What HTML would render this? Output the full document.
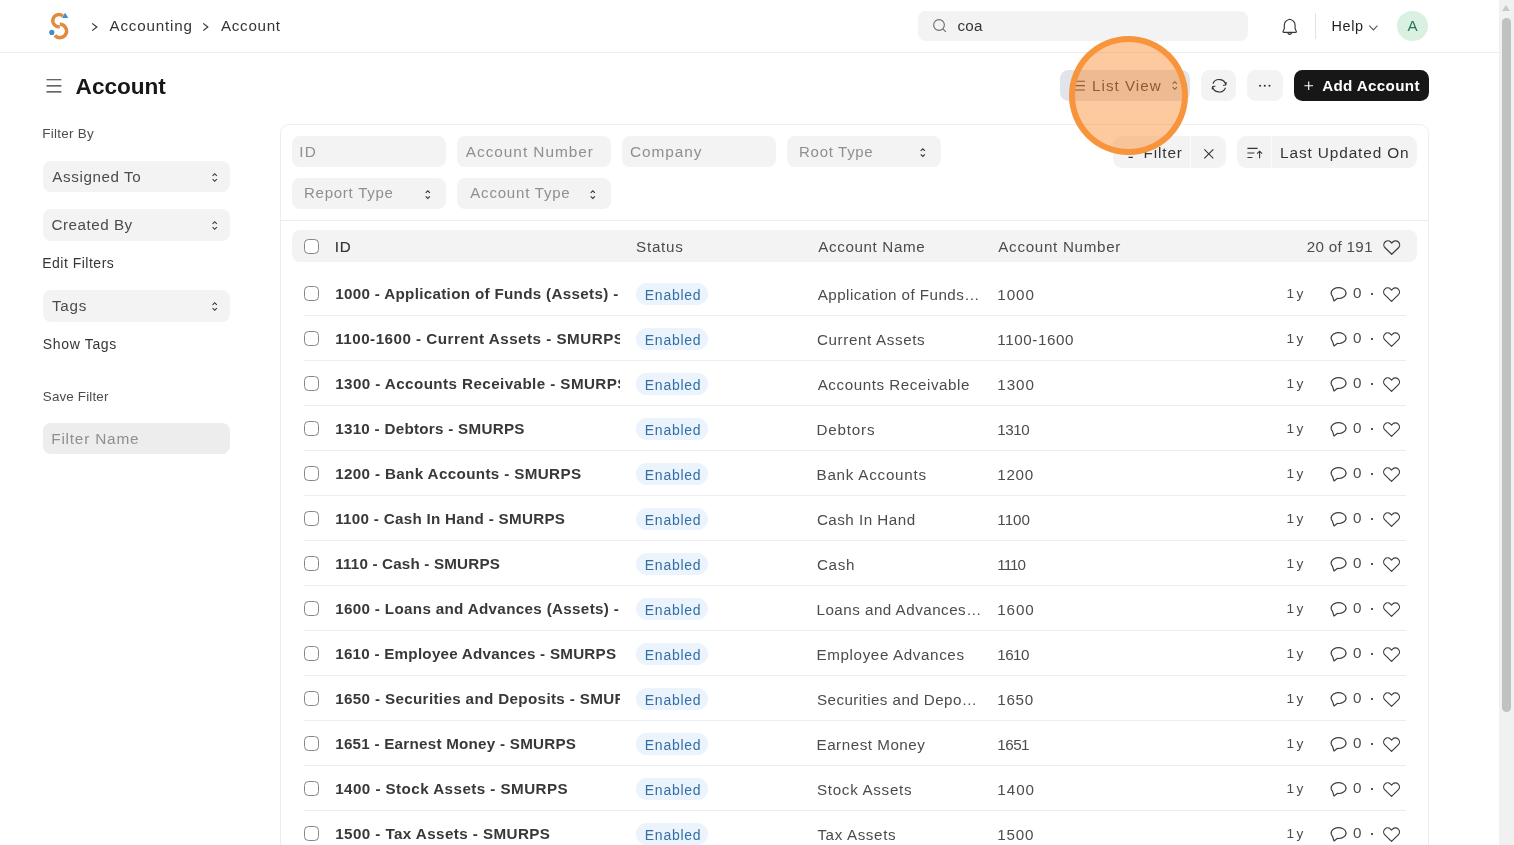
<!DOCTYPE html>
<html lang="en">
<head>
<meta charset="utf-8">
<title>Account</title>
<style>
*{box-sizing:border-box}
html,body{margin:0;padding:0}
body{width:1514px;height:845px;overflow:hidden;position:relative;background:#fff;color:#383838;font-family:"Liberation Sans",sans-serif;font-size:16px;opacity:.999;will-change:transform}
h1{margin:0}
svg{display:block;position:absolute;overflow:visible}
.t{position:absolute;white-space:nowrap;line-height:20px;font-weight:400;text-decoration:none}
.sb{position:absolute;left:1499px;top:0;width:15px;height:845px;background:#f1f1f1}
.sb i{position:absolute;left:3px;top:18px;width:9px;height:694px;border-radius:5px;background:#c1c1c1}
.sb b{position:absolute;left:3px;top:5px;width:0;height:0;border-left:4.5px solid transparent;border-right:4.5px solid transparent;border-bottom:6px solid #c9c9c9}
.nav{position:absolute;left:0;top:0;width:1499px;height:53px;border-bottom:1px solid #ededed}
.avatar{position:absolute;left:1396.800px;top:10.800px;width:31.200px;height:30px;border-radius:50%;background:#daf0e1}
.frame{position:absolute;left:280px;top:124px;width:1149px;height:760px;border:1px solid #ededed;border-radius:9px 9px 0 0}
.cb{position:absolute;width:15px;height:15px;border:1px solid #858585;border-radius:4.500px;background:#fff}
.rowline{position:absolute;left:303.600px;width:1102.800px;height:1px;background:#ededed}
.pill{position:absolute;left:636px;width:72px;height:22.200px;border-radius:12px;background:#ebf3fc}
.hl{position:absolute;left:1069.100px;top:36.200px;width:119px;height:118.600px;border-radius:50%;background:rgba(251,138,44,.46);border:6px solid #f7943c}
</style>
</head>
<body>
<div class="sb"><b></b><i></i></div>
<header>
<div class="nav"></div>
<svg class="ic" style="left:48px;top:11px" width="22" height="30" viewBox="48 11 22 30"><path d="M62.82 15.93A6.1 6.1 0 1 0 59.75 26.64" fill="none" stroke="#e08a3c" stroke-width="3.400"/><path d="M59.78 24.35A6.65 6.65 0 1 1 54.81 35.27" fill="none" stroke="#e08a3c" stroke-width="3.500"/><path d="M65.100 12.700 68.300 17.900H62z" fill="#3f8fc4"/><circle cx="51.800" cy="32.400" r="2.600" fill="#3f8fc4"/></svg>
<svg class="ic" style="left:91px;top:22px" width="8" height="10" viewBox="91 22 8 10"><path d="M92.2 23.400 96.8 27 92.2 30.600" fill="none" stroke="#353535" stroke-width="1.200"/></svg>
<span class="t" style="left:109.5px;top:16px;font-size:15.2px;color:#353535;letter-spacing:0.81px;">Accounting</span>
<svg class="ic" style="left:202px;top:22px" width="8" height="10" viewBox="202 22 8 10"><path d="M203.2 23.400 207.8 27 203.2 30.600" fill="none" stroke="#353535" stroke-width="1.200"/></svg>
<span class="t" style="left:221.0px;top:16px;font-size:15.2px;color:#353535;letter-spacing:0.69px;">Account</span>
<div class="search" style="position:absolute;left:918px;top:11px;width:330px;height:30px;background:rgba(243,243,243,.998);border-radius:8px;"></div>
<svg class="ic" style="left:931px;top:18px" width="17" height="17" viewBox="931 18 17 17"><circle cx="939" cy="25" r="5.350" fill="none" stroke="#6b6b6b" stroke-width="1.100"/><path d="M942.800 28.800 945.900 31.900" stroke="#6b6b6b" stroke-width="1.100" fill="none"/></svg>
<span class="t" style="left:957.4px;top:16px;font-size:15.2px;color:#353535;letter-spacing:0.27px;">coa</span>
<svg class="ic" style="left:1281px;top:17px" width="17" height="19" viewBox="1281 17 17 19"><path transform="translate(0 .450)" d="M1289.700 18.800C1286.600 19.500 1284.400 21.600 1284.300 24.700L1284.300 28.300L1283.100 30.900Q1282.800 31.900 1283.800 31.900L1295.600 31.900Q1296.600 31.900 1296.300 30.900L1295.100 28.300L1295.100 24.700C1295 21.600 1292.800 19.500 1289.700 18.800ZM1287.800 32.300a1.950 2 0 0 0 3.800 0" fill="none" stroke="#383838" stroke-width="1.150" stroke-linejoin="round"/></svg>
<div style="position:absolute;left:1315px;top:13px;width:1px;height:26px;background:#e2e2e2;border-radius:0;"></div>
<span class="t" style="left:1331.6px;top:16px;font-size:14.4px;color:#1f1f1f;letter-spacing:0.61px;">Help</span>
<svg class="ic" style="left:1368px;top:24px" width="12" height="8" viewBox="1368 24 12 8"><path d="M1369.300 25.600 1373.400 29.900l4.100-4.300" fill="none" stroke="#555" stroke-width="1.050"/></svg>
<div class="avatar"></div>
<span class="t" style="left:1407.4px;top:16px;font-size:15.2px;color:#2a7558;">A</span>
</header>
<section class="page-head">
<svg class="ic" style="left:46px;top:79px" width="16" height="14" viewBox="46 79 16 14"><path d="M46.500 79.700h14.900M46.500 85.800h14.900M46.500 91.900h14.900" stroke="#353535" stroke-width="1.150" fill="none"/></svg>
<h1 class="t" style="left:75.6px;top:77px;font-size:22.6px;color:#171717;letter-spacing:-0.03px;font-weight:700;">Account</h1>
<div style="position:absolute;left:1059.5px;top:70px;width:130.2px;height:30.7px;background:#e1e4e9;border-radius:8.5px;"></div>
<svg class="ic" style="left:1074px;top:80px" width="12" height="11" viewBox="1074 80 12 11"><path d="M1075 81.200h10M1075 85.600h10M1075 90h10" stroke="#353535" stroke-width="1.100" fill="none"/></svg>
<span class="t" style="left:1092.1px;top:76px;font-size:15.2px;color:#353535;letter-spacing:1.01px;">List View</span>
<svg class="ic" style="left:1171px;top:80px" width="8" height="11" viewBox="1171 80 8 11"><path d="M1172.7 83.8 1174.8 81.7l2.100 2.100M1172.7 87.2 1174.8 89.3l2.100-2.100" stroke="#353535" stroke-width="1.100" fill="none"/></svg>
<div style="position:absolute;left:1201.3px;top:70px;width:34.5px;height:30.7px;background:rgba(243,243,243,.998);border-radius:8.5px;"></div>
<svg class="ic" style="left:1210px;top:78px" width="18" height="16" viewBox="1210 78 18 16"><path d="M1213.12 83.33A6.6 6.2 0 0 1 1225.74 84.89M1225.28 88.17A6.6 6.2 0 0 1 1212.66 86.61M1223.500 85.300l2.300-.300.400-2.400M1214.900 86.200l-2.300.300-.400 2.400" fill="none" stroke="#353535" stroke-width="1.150" stroke-linejoin="round" stroke-linecap="round"/></svg>
<div style="position:absolute;left:1247.3px;top:70px;width:35.3px;height:30.7px;background:rgba(243,243,243,.998);border-radius:8.5px;"></div>
<svg class="ic" style="left:1258px;top:84px" width="14" height="4" viewBox="1258 84 14 4"><circle cx="1260.1" cy="85.700" r="1.050" fill="#353535"/><circle cx="1264.8" cy="85.700" r="1.050" fill="#353535"/><circle cx="1269.5" cy="85.700" r="1.050" fill="#353535"/></svg>
<div style="position:absolute;left:1294px;top:70px;width:135px;height:30.7px;background:#171717;border-radius:8.5px;"></div>
<svg class="ic" style="left:1304px;top:81px" width="10" height="10" viewBox="1304 81 10 10"><path d="M1308.700 81.500v8.600M1304.400 85.800h8.600" stroke="#fff" stroke-width="1.100" fill="none"/></svg>
<span class="t" style="left:1322.2px;top:76px;font-size:15.2px;color:#fff;letter-spacing:0.34px;font-weight:700;">Add Account</span>
</section>
<aside>
<span class="t" style="left:42.2px;top:124px;font-size:13.4px;color:#4c4c4c;letter-spacing:0.30px;">Filter By</span>
<div style="position:absolute;left:43px;top:161px;width:187px;height:30.8px;background:rgba(243,243,243,.998);border-radius:8px;"></div>
<span class="t" style="left:52.3px;top:167px;font-size:15.2px;color:#4c4c4c;letter-spacing:0.60px;">Assigned To</span>
<svg class="ic" style="left:211px;top:172px" width="8" height="11" viewBox="211 172 8 11"><path d="M212.6 175.8 214.7 173.7l2.100 2.100M212.6 179.2 214.7 181.3l2.100-2.100" stroke="#353535" stroke-width="1.100" fill="none"/></svg>
<div style="position:absolute;left:43px;top:209px;width:187px;height:31.5px;background:rgba(243,243,243,.998);border-radius:8px;"></div>
<span class="t" style="left:51.5px;top:215px;font-size:15.2px;color:#4c4c4c;letter-spacing:0.52px;">Created By</span>
<svg class="ic" style="left:211px;top:220px" width="8" height="11" viewBox="211 220 8 11"><path d="M212.6 223.8 214.7 221.7l2.100 2.100M212.6 227.2 214.7 229.3l2.100-2.100" stroke="#353535" stroke-width="1.100" fill="none"/></svg>
<div style="position:absolute;left:43px;top:290px;width:187px;height:31.5px;background:rgba(243,243,243,.998);border-radius:8px;"></div>
<span class="t" style="left:52.0px;top:296px;font-size:15.2px;color:#4c4c4c;letter-spacing:0.74px;">Tags</span>
<svg class="ic" style="left:211px;top:301px" width="8" height="11" viewBox="211 301 8 11"><path d="M212.6 304.8 214.7 302.7l2.100 2.100M212.6 308.2 214.7 310.3l2.100-2.100" stroke="#353535" stroke-width="1.100" fill="none"/></svg>
<span class="t" style="left:42.2px;top:253px;font-size:14px;color:#353535;letter-spacing:0.50px;">Edit Filters</span>
<span class="t" style="left:42.8px;top:334px;font-size:14px;color:#353535;letter-spacing:0.66px;">Show Tags</span>
<span class="t" style="left:42.8px;top:387px;font-size:13.4px;color:#4c4c4c;letter-spacing:0.16px;">Save Filter</span>
<div style="position:absolute;left:43px;top:423px;width:187px;height:30.6px;background:#ededed;border-radius:8px;"></div>
<span class="t" style="left:51.2px;top:429px;font-size:15.4px;color:#8f8f8f;letter-spacing:0.79px;">Filter Name</span>
</aside>
<main>
<section class="filters">
<div class="frame"></div>
<div style="position:absolute;left:292px;top:136px;width:154px;height:30.5px;background:rgba(243,243,243,.998);border-radius:8px;"></div>
<span class="t" style="left:299.3px;top:142px;font-size:15.4px;color:#8f8f8f;letter-spacing:1.20px;">ID</span>
<div style="position:absolute;left:457px;top:136px;width:154px;height:30.5px;background:rgba(243,243,243,.998);border-radius:8px;"></div>
<span class="t" style="left:465.8px;top:142px;font-size:15.4px;color:#8f8f8f;letter-spacing:0.96px;">Account Number</span>
<div style="position:absolute;left:622px;top:136px;width:154px;height:30.5px;background:rgba(243,243,243,.998);border-radius:8px;"></div>
<span class="t" style="left:629.9px;top:142px;font-size:15.4px;color:#8f8f8f;letter-spacing:0.94px;">Company</span>
<div style="position:absolute;left:787px;top:136px;width:154px;height:30.5px;background:rgba(243,243,243,.998);border-radius:8px;"></div>
<span class="t" style="left:799.1px;top:142px;font-size:15.0px;color:#8f8f8f;letter-spacing:0.69px;">Root Type</span>
<svg class="ic" style="left:919px;top:147px" width="8" height="12" viewBox="919 147 8 12"><path d="M920.6999999999999 150.9 922.8 148.79999999999998l2.100 2.100M920.6999999999999 154.29999999999998 922.8 156.4l2.100-2.100" stroke="#353535" stroke-width="1.100" fill="none"/></svg>
<div style="position:absolute;left:292px;top:178px;width:154px;height:30.5px;background:rgba(243,243,243,.998);border-radius:8px;"></div>
<span class="t" style="left:304.0px;top:183px;font-size:15.0px;color:#8f8f8f;letter-spacing:0.75px;">Report Type</span>
<svg class="ic" style="left:424px;top:189px" width="8" height="12" viewBox="424 189 8 12"><path d="M425.7 192.9 427.8 190.79999999999998l2.100 2.100M425.7 196.29999999999998 427.8 198.4l2.100-2.100" stroke="#353535" stroke-width="1.100" fill="none"/></svg>
<div style="position:absolute;left:457px;top:178px;width:154px;height:30.5px;background:rgba(243,243,243,.998);border-radius:8px;"></div>
<span class="t" style="left:470.3px;top:183px;font-size:15.0px;color:#8f8f8f;letter-spacing:0.80px;">Account Type</span>
<svg class="ic" style="left:589px;top:189px" width="8" height="12" viewBox="589 189 8 12"><path d="M590.6999999999999 192.9 592.8 190.79999999999998l2.100 2.100M590.6999999999999 196.29999999999998 592.8 198.4l2.100-2.100" stroke="#353535" stroke-width="1.100" fill="none"/></svg>
<div style="position:absolute;left:1113px;top:136px;width:113px;height:31.5px;background:rgba(243,243,243,.998);border-radius:9px;"></div>
<svg class="ic" style="left:1124px;top:148px" width="13" height="11" viewBox="1124 148 13 11"><path d="M1124.700 149.800h12M1126.700 153.600h8M1128.500 157.400h4.400" stroke="#353535" stroke-width="1.100" fill="none"/></svg>
<span class="t" style="left:1143.4px;top:143px;font-size:15.4px;color:#353535;letter-spacing:0.87px;">Filter</span>
<div style="position:absolute;left:1190.2px;top:136px;width:0.9px;height:31.5px;background:rgba(255,255,255,.7);border-radius:0;"></div>
<svg class="ic" style="left:1204px;top:149px" width="10" height="10" viewBox="1204 149 10 10"><path d="M1204.300 149.400l9 9M1213.300 149.400l-9 9" stroke="#353535" stroke-width="1.100" fill="none"/></svg>
<div style="position:absolute;left:1237px;top:136px;width:180px;height:31.5px;background:rgba(243,243,243,.998);border-radius:9px;"></div>
<svg class="ic" style="left:1246px;top:147px" width="17" height="12" viewBox="1246 147 17 12"><path d="M1247.400 148.400h10.200M1247.400 153h7M1247.400 157.500h5M1259.600 158.200v-6.800M1257.100 153.700l2.500-2.500 2.500 2.500" stroke="#353535" stroke-width="1.100" fill="none"/></svg>
<div style="position:absolute;left:1271.1px;top:136px;width:0.9px;height:31.5px;background:rgba(255,255,255,.7);border-radius:0;"></div>
<span class="t" style="left:1280.1px;top:143px;font-size:15.4px;color:#353535;letter-spacing:0.87px;">Last Updated On</span>
<div style="position:absolute;left:281px;top:220px;width:1147px;height:1px;background:#ededed;border-radius:0;"></div>
</section>
<section class="list">
<div class="list-head">
<div style="position:absolute;left:292px;top:230.2px;width:1125px;height:32.1px;background:rgba(243,243,243,.998);border-radius:8px;"></div>
<span class="cb" style="left:304px;top:239px"></span>
<span class="t" style="left:334.8px;top:237px;font-size:15.2px;color:#353535;letter-spacing:0.79px;-webkit-text-stroke:.2px #353535;">ID</span>
<span class="t" style="left:636.1px;top:237px;font-size:15.2px;color:#4c4c4c;letter-spacing:0.74px;">Status</span>
<span class="t" style="left:818.2px;top:237px;font-size:15.2px;color:#4c4c4c;letter-spacing:0.63px;">Account Name</span>
<span class="t" style="left:998.3px;top:237px;font-size:15.2px;color:#4c4c4c;letter-spacing:0.69px;">Account Number</span>
<span class="t" style="left:1306.7px;top:237px;font-size:15.2px;color:#4c4c4c;letter-spacing:0.32px;">20 of 191</span>
<svg class="ic" style="left:1382px;top:239px" width="20" height="17" viewBox="1382 239 20 17"><path transform="translate(1383.3 240)" d="M8.450 14.250 1.750 7.750C.150 6.150.150 3.600 1.750 2C3.300.450 5.900.450 7.450 2L8.450 3l1-1C11 .450 13.600.450 15.150 2c1.600 1.600 1.600 4.150 0 5.750Z" fill="none" stroke="#3d3d3d" stroke-width="1.200" stroke-linejoin="round"/></svg>
</div>
<div class="list-row">
<div class="rowline" style="top:315px"></div>
<span class="cb" style="left:304px;top:286px"></span>
<a class="t idc" style="left:335.2px;top:284px;font-size:15.2px;color:#383838;letter-spacing:0.32px;font-weight:700;width:285.1px;overflow:hidden;">1000 - Application of Funds (Assets) - SMURPS</a>
<span class="pill" style="top:283px"></span>
<span class="t" style="left:644.8px;top:285px;font-size:14px;color:#336fa6;letter-spacing:0.74px;">Enabled</span>
<span class="t" style="left:817.7px;top:285px;font-size:15.2px;color:#4c4c4c;letter-spacing:0.45px;">Application of Funds…</span>
<span class="t" style="left:997.3px;top:285px;font-size:15.2px;color:#4c4c4c;letter-spacing:0.94px;">1000</span>
<span class="t" style="left:1286.5px;top:284px;font-size:13.6px;color:#4c4c4c;word-spacing:-1.300px;">1 y</span>
<svg class="ic" style="left:1329px;top:286px" width="20" height="18" viewBox="1329 286 20 18"><path transform="translate(1330.5 287.1)" d="M6.81 11.32A7.45 5.45 0 1 0 1.92 9.00L3.500 13.900Z" fill="none" stroke="#3d3d3d" stroke-width="1.200" stroke-linejoin="round"/></svg>
<span class="t" style="left:1352.9px;top:283px;font-size:15.2px;color:#4c4c4c;">0</span>
<span class="t" style="left:1370.2px;top:284px;font-size:13px;color:#444;font-weight:700;">·</span>
<svg class="ic" style="left:1382px;top:286px" width="20" height="18" viewBox="1382 286 20 18"><path transform="translate(1383.1 287.1)" d="M8.450 14.250 1.750 7.750C.150 6.150.150 3.600 1.750 2C3.300.450 5.900.450 7.450 2L8.450 3l1-1C11 .450 13.600.450 15.150 2c1.600 1.600 1.600 4.150 0 5.750Z" fill="none" stroke="#3d3d3d" stroke-width="1.200" stroke-linejoin="round"/></svg>
</div>
<div class="list-row">
<div class="rowline" style="top:360px"></div>
<span class="cb" style="left:304px;top:331px"></span>
<a class="t idc" style="left:335.2px;top:329px;font-size:15.2px;color:#383838;letter-spacing:0.49px;font-weight:700;width:285.1px;overflow:hidden;">1100-1600 - Current Assets - SMURPS</a>
<span class="pill" style="top:328px"></span>
<span class="t" style="left:644.8px;top:330px;font-size:14px;color:#336fa6;letter-spacing:0.74px;">Enabled</span>
<span class="t" style="left:816.9px;top:330px;font-size:15.2px;color:#4c4c4c;letter-spacing:0.63px;">Current Assets</span>
<span class="t" style="left:997.3px;top:330px;font-size:15.2px;color:#4c4c4c;letter-spacing:0.59px;">1100-1600</span>
<span class="t" style="left:1286.5px;top:329px;font-size:13.6px;color:#4c4c4c;word-spacing:-1.300px;">1 y</span>
<svg class="ic" style="left:1329px;top:331px" width="20" height="18" viewBox="1329 331 20 18"><path transform="translate(1330.5 332.1)" d="M6.81 11.32A7.45 5.45 0 1 0 1.92 9.00L3.500 13.900Z" fill="none" stroke="#3d3d3d" stroke-width="1.200" stroke-linejoin="round"/></svg>
<span class="t" style="left:1352.9px;top:328px;font-size:15.2px;color:#4c4c4c;">0</span>
<span class="t" style="left:1370.2px;top:329px;font-size:13px;color:#444;font-weight:700;">·</span>
<svg class="ic" style="left:1382px;top:331px" width="20" height="18" viewBox="1382 331 20 18"><path transform="translate(1383.1 332.1)" d="M8.450 14.250 1.750 7.750C.150 6.150.150 3.600 1.750 2C3.300.450 5.900.450 7.450 2L8.450 3l1-1C11 .450 13.600.450 15.150 2c1.600 1.600 1.600 4.150 0 5.750Z" fill="none" stroke="#3d3d3d" stroke-width="1.200" stroke-linejoin="round"/></svg>
</div>
<div class="list-row">
<div class="rowline" style="top:405px"></div>
<span class="cb" style="left:304px;top:376px"></span>
<a class="t idc" style="left:335.2px;top:374px;font-size:15.2px;color:#383838;letter-spacing:0.42px;font-weight:700;width:285.1px;overflow:hidden;">1300 - Accounts Receivable - SMURPS</a>
<span class="pill" style="top:373px"></span>
<span class="t" style="left:644.8px;top:375px;font-size:14px;color:#336fa6;letter-spacing:0.74px;">Enabled</span>
<span class="t" style="left:817.7px;top:375px;font-size:15.2px;color:#4c4c4c;letter-spacing:0.55px;">Accounts Receivable</span>
<span class="t" style="left:997.3px;top:375px;font-size:15.2px;color:#4c4c4c;letter-spacing:0.94px;">1300</span>
<span class="t" style="left:1286.5px;top:374px;font-size:13.6px;color:#4c4c4c;word-spacing:-1.300px;">1 y</span>
<svg class="ic" style="left:1329px;top:376px" width="20" height="18" viewBox="1329 376 20 18"><path transform="translate(1330.5 377.1)" d="M6.81 11.32A7.45 5.45 0 1 0 1.92 9.00L3.500 13.900Z" fill="none" stroke="#3d3d3d" stroke-width="1.200" stroke-linejoin="round"/></svg>
<span class="t" style="left:1352.9px;top:373px;font-size:15.2px;color:#4c4c4c;">0</span>
<span class="t" style="left:1370.2px;top:374px;font-size:13px;color:#444;font-weight:700;">·</span>
<svg class="ic" style="left:1382px;top:376px" width="20" height="18" viewBox="1382 376 20 18"><path transform="translate(1383.1 377.1)" d="M8.450 14.250 1.750 7.750C.150 6.150.150 3.600 1.750 2C3.300.450 5.900.450 7.450 2L8.450 3l1-1C11 .450 13.600.450 15.150 2c1.600 1.600 1.600 4.150 0 5.750Z" fill="none" stroke="#3d3d3d" stroke-width="1.200" stroke-linejoin="round"/></svg>
</div>
<div class="list-row">
<div class="rowline" style="top:450px"></div>
<span class="cb" style="left:304px;top:421px"></span>
<a class="t idc" style="left:335.2px;top:419px;font-size:15.2px;color:#383838;letter-spacing:0.28px;font-weight:700;width:285.1px;overflow:hidden;">1310 - Debtors - SMURPS</a>
<span class="pill" style="top:418px"></span>
<span class="t" style="left:644.8px;top:420px;font-size:14px;color:#336fa6;letter-spacing:0.74px;">Enabled</span>
<span class="t" style="left:816.5px;top:420px;font-size:15.2px;color:#4c4c4c;letter-spacing:0.80px;">Debtors</span>
<span class="t" style="left:997.3px;top:420px;font-size:15.2px;color:#4c4c4c;letter-spacing:-0.49px;">1310</span>
<span class="t" style="left:1286.5px;top:419px;font-size:13.6px;color:#4c4c4c;word-spacing:-1.300px;">1 y</span>
<svg class="ic" style="left:1329px;top:421px" width="20" height="18" viewBox="1329 421 20 18"><path transform="translate(1330.5 422.1)" d="M6.81 11.32A7.45 5.45 0 1 0 1.92 9.00L3.500 13.900Z" fill="none" stroke="#3d3d3d" stroke-width="1.200" stroke-linejoin="round"/></svg>
<span class="t" style="left:1352.9px;top:418px;font-size:15.2px;color:#4c4c4c;">0</span>
<span class="t" style="left:1370.2px;top:419px;font-size:13px;color:#444;font-weight:700;">·</span>
<svg class="ic" style="left:1382px;top:421px" width="20" height="18" viewBox="1382 421 20 18"><path transform="translate(1383.1 422.1)" d="M8.450 14.250 1.750 7.750C.150 6.150.150 3.600 1.750 2C3.300.450 5.900.450 7.450 2L8.450 3l1-1C11 .450 13.600.450 15.150 2c1.600 1.600 1.600 4.150 0 5.750Z" fill="none" stroke="#3d3d3d" stroke-width="1.200" stroke-linejoin="round"/></svg>
</div>
<div class="list-row">
<div class="rowline" style="top:495px"></div>
<span class="cb" style="left:304px;top:466px"></span>
<a class="t idc" style="left:335.2px;top:464px;font-size:15.2px;color:#383838;letter-spacing:0.36px;font-weight:700;width:285.1px;overflow:hidden;">1200 - Bank Accounts - SMURPS</a>
<span class="pill" style="top:463px"></span>
<span class="t" style="left:644.8px;top:465px;font-size:14px;color:#336fa6;letter-spacing:0.74px;">Enabled</span>
<span class="t" style="left:816.5px;top:465px;font-size:15.2px;color:#4c4c4c;letter-spacing:0.76px;">Bank Accounts</span>
<span class="t" style="left:997.3px;top:465px;font-size:15.2px;color:#4c4c4c;letter-spacing:0.68px;">1200</span>
<span class="t" style="left:1286.5px;top:464px;font-size:13.6px;color:#4c4c4c;word-spacing:-1.300px;">1 y</span>
<svg class="ic" style="left:1329px;top:466px" width="20" height="18" viewBox="1329 466 20 18"><path transform="translate(1330.5 467.1)" d="M6.81 11.32A7.45 5.45 0 1 0 1.92 9.00L3.500 13.900Z" fill="none" stroke="#3d3d3d" stroke-width="1.200" stroke-linejoin="round"/></svg>
<span class="t" style="left:1352.9px;top:463px;font-size:15.2px;color:#4c4c4c;">0</span>
<span class="t" style="left:1370.2px;top:464px;font-size:13px;color:#444;font-weight:700;">·</span>
<svg class="ic" style="left:1382px;top:466px" width="20" height="18" viewBox="1382 466 20 18"><path transform="translate(1383.1 467.1)" d="M8.450 14.250 1.750 7.750C.150 6.150.150 3.600 1.750 2C3.300.450 5.900.450 7.450 2L8.450 3l1-1C11 .450 13.600.450 15.150 2c1.600 1.600 1.600 4.150 0 5.750Z" fill="none" stroke="#3d3d3d" stroke-width="1.200" stroke-linejoin="round"/></svg>
</div>
<div class="list-row">
<div class="rowline" style="top:540px"></div>
<span class="cb" style="left:304px;top:511px"></span>
<a class="t idc" style="left:335.2px;top:509px;font-size:15.2px;color:#383838;letter-spacing:0.29px;font-weight:700;width:285.1px;overflow:hidden;">1100 - Cash In Hand - SMURPS</a>
<span class="pill" style="top:508px"></span>
<span class="t" style="left:644.8px;top:510px;font-size:14px;color:#336fa6;letter-spacing:0.74px;">Enabled</span>
<span class="t" style="left:816.9px;top:510px;font-size:15.2px;color:#4c4c4c;letter-spacing:0.49px;">Cash In Hand</span>
<span class="t" style="left:997.3px;top:510px;font-size:15.2px;color:#4c4c4c;letter-spacing:0.01px;">1100</span>
<span class="t" style="left:1286.5px;top:509px;font-size:13.6px;color:#4c4c4c;word-spacing:-1.300px;">1 y</span>
<svg class="ic" style="left:1329px;top:511px" width="20" height="18" viewBox="1329 511 20 18"><path transform="translate(1330.5 512.1)" d="M6.81 11.32A7.45 5.45 0 1 0 1.92 9.00L3.500 13.900Z" fill="none" stroke="#3d3d3d" stroke-width="1.200" stroke-linejoin="round"/></svg>
<span class="t" style="left:1352.9px;top:508px;font-size:15.2px;color:#4c4c4c;">0</span>
<span class="t" style="left:1370.2px;top:509px;font-size:13px;color:#444;font-weight:700;">·</span>
<svg class="ic" style="left:1382px;top:511px" width="20" height="18" viewBox="1382 511 20 18"><path transform="translate(1383.1 512.1)" d="M8.450 14.250 1.750 7.750C.150 6.150.150 3.600 1.750 2C3.300.450 5.900.450 7.450 2L8.450 3l1-1C11 .450 13.600.450 15.150 2c1.600 1.600 1.600 4.150 0 5.750Z" fill="none" stroke="#3d3d3d" stroke-width="1.200" stroke-linejoin="round"/></svg>
</div>
<div class="list-row">
<div class="rowline" style="top:585px"></div>
<span class="cb" style="left:304px;top:556px"></span>
<a class="t idc" style="left:335.2px;top:554px;font-size:15.2px;color:#383838;letter-spacing:0.18px;font-weight:700;width:285.1px;overflow:hidden;">1110 - Cash - SMURPS</a>
<span class="pill" style="top:553px"></span>
<span class="t" style="left:644.8px;top:555px;font-size:14px;color:#336fa6;letter-spacing:0.74px;">Enabled</span>
<span class="t" style="left:816.9px;top:555px;font-size:15.2px;color:#4c4c4c;letter-spacing:0.69px;">Cash</span>
<span class="t" style="left:997.3px;top:555px;font-size:15.2px;color:#4c4c4c;letter-spacing:-0.98px;">1110</span>
<span class="t" style="left:1286.5px;top:554px;font-size:13.6px;color:#4c4c4c;word-spacing:-1.300px;">1 y</span>
<svg class="ic" style="left:1329px;top:556px" width="20" height="18" viewBox="1329 556 20 18"><path transform="translate(1330.5 557.1)" d="M6.81 11.32A7.45 5.45 0 1 0 1.92 9.00L3.500 13.900Z" fill="none" stroke="#3d3d3d" stroke-width="1.200" stroke-linejoin="round"/></svg>
<span class="t" style="left:1352.9px;top:553px;font-size:15.2px;color:#4c4c4c;">0</span>
<span class="t" style="left:1370.2px;top:554px;font-size:13px;color:#444;font-weight:700;">·</span>
<svg class="ic" style="left:1382px;top:556px" width="20" height="18" viewBox="1382 556 20 18"><path transform="translate(1383.1 557.1)" d="M8.450 14.250 1.750 7.750C.150 6.150.150 3.600 1.750 2C3.300.450 5.900.450 7.450 2L8.450 3l1-1C11 .450 13.600.450 15.150 2c1.600 1.600 1.600 4.150 0 5.750Z" fill="none" stroke="#3d3d3d" stroke-width="1.200" stroke-linejoin="round"/></svg>
</div>
<div class="list-row">
<div class="rowline" style="top:630px"></div>
<span class="cb" style="left:304px;top:601px"></span>
<a class="t idc" style="left:335.2px;top:599px;font-size:15.2px;color:#383838;letter-spacing:0.33px;font-weight:700;width:285.1px;overflow:hidden;">1600 - Loans and Advances (Assets) - SMURPS</a>
<span class="pill" style="top:598px"></span>
<span class="t" style="left:644.8px;top:600px;font-size:14px;color:#336fa6;letter-spacing:0.74px;">Enabled</span>
<span class="t" style="left:816.5px;top:600px;font-size:15.2px;color:#4c4c4c;letter-spacing:0.48px;">Loans and Advances…</span>
<span class="t" style="left:997.3px;top:600px;font-size:15.2px;color:#4c4c4c;letter-spacing:0.88px;">1600</span>
<span class="t" style="left:1286.5px;top:599px;font-size:13.6px;color:#4c4c4c;word-spacing:-1.300px;">1 y</span>
<svg class="ic" style="left:1329px;top:601px" width="20" height="18" viewBox="1329 601 20 18"><path transform="translate(1330.5 602.1)" d="M6.81 11.32A7.45 5.45 0 1 0 1.92 9.00L3.500 13.900Z" fill="none" stroke="#3d3d3d" stroke-width="1.200" stroke-linejoin="round"/></svg>
<span class="t" style="left:1352.9px;top:598px;font-size:15.2px;color:#4c4c4c;">0</span>
<span class="t" style="left:1370.2px;top:599px;font-size:13px;color:#444;font-weight:700;">·</span>
<svg class="ic" style="left:1382px;top:601px" width="20" height="18" viewBox="1382 601 20 18"><path transform="translate(1383.1 602.1)" d="M8.450 14.250 1.750 7.750C.150 6.150.150 3.600 1.750 2C3.300.450 5.900.450 7.450 2L8.450 3l1-1C11 .450 13.600.450 15.150 2c1.600 1.600 1.600 4.150 0 5.750Z" fill="none" stroke="#3d3d3d" stroke-width="1.200" stroke-linejoin="round"/></svg>
</div>
<div class="list-row">
<div class="rowline" style="top:675px"></div>
<span class="cb" style="left:304px;top:646px"></span>
<a class="t idc" style="left:335.2px;top:644px;font-size:15.2px;color:#383838;letter-spacing:0.25px;font-weight:700;width:285.1px;overflow:hidden;">1610 - Employee Advances - SMURPS</a>
<span class="pill" style="top:643px"></span>
<span class="t" style="left:644.8px;top:645px;font-size:14px;color:#336fa6;letter-spacing:0.74px;">Enabled</span>
<span class="t" style="left:816.5px;top:645px;font-size:15.2px;color:#4c4c4c;letter-spacing:0.62px;">Employee Advances</span>
<span class="t" style="left:997.3px;top:645px;font-size:15.2px;color:#4c4c4c;letter-spacing:-0.56px;">1610</span>
<span class="t" style="left:1286.5px;top:644px;font-size:13.6px;color:#4c4c4c;word-spacing:-1.300px;">1 y</span>
<svg class="ic" style="left:1329px;top:646px" width="20" height="18" viewBox="1329 646 20 18"><path transform="translate(1330.5 647.1)" d="M6.81 11.32A7.45 5.45 0 1 0 1.92 9.00L3.500 13.900Z" fill="none" stroke="#3d3d3d" stroke-width="1.200" stroke-linejoin="round"/></svg>
<span class="t" style="left:1352.9px;top:643px;font-size:15.2px;color:#4c4c4c;">0</span>
<span class="t" style="left:1370.2px;top:644px;font-size:13px;color:#444;font-weight:700;">·</span>
<svg class="ic" style="left:1382px;top:646px" width="20" height="18" viewBox="1382 646 20 18"><path transform="translate(1383.1 647.1)" d="M8.450 14.250 1.750 7.750C.150 6.150.150 3.600 1.750 2C3.300.450 5.900.450 7.450 2L8.450 3l1-1C11 .450 13.600.450 15.150 2c1.600 1.600 1.600 4.150 0 5.750Z" fill="none" stroke="#3d3d3d" stroke-width="1.200" stroke-linejoin="round"/></svg>
</div>
<div class="list-row">
<div class="rowline" style="top:720px"></div>
<span class="cb" style="left:304px;top:691px"></span>
<a class="t idc" style="left:335.2px;top:689px;font-size:15.2px;color:#383838;letter-spacing:0.35px;font-weight:700;width:285.1px;overflow:hidden;">1650 - Securities and Deposits - SMURPS</a>
<span class="pill" style="top:688px"></span>
<span class="t" style="left:644.8px;top:690px;font-size:14px;color:#336fa6;letter-spacing:0.74px;">Enabled</span>
<span class="t" style="left:817.0px;top:690px;font-size:15.2px;color:#4c4c4c;letter-spacing:0.42px;">Securities and Depo…</span>
<span class="t" style="left:997.3px;top:690px;font-size:15.2px;color:#4c4c4c;letter-spacing:0.68px;">1650</span>
<span class="t" style="left:1286.5px;top:689px;font-size:13.6px;color:#4c4c4c;word-spacing:-1.300px;">1 y</span>
<svg class="ic" style="left:1329px;top:691px" width="20" height="18" viewBox="1329 691 20 18"><path transform="translate(1330.5 692.1)" d="M6.81 11.32A7.45 5.45 0 1 0 1.92 9.00L3.500 13.900Z" fill="none" stroke="#3d3d3d" stroke-width="1.200" stroke-linejoin="round"/></svg>
<span class="t" style="left:1352.9px;top:688px;font-size:15.2px;color:#4c4c4c;">0</span>
<span class="t" style="left:1370.2px;top:689px;font-size:13px;color:#444;font-weight:700;">·</span>
<svg class="ic" style="left:1382px;top:691px" width="20" height="18" viewBox="1382 691 20 18"><path transform="translate(1383.1 692.1)" d="M8.450 14.250 1.750 7.750C.150 6.150.150 3.600 1.750 2C3.300.450 5.900.450 7.450 2L8.450 3l1-1C11 .450 13.600.450 15.150 2c1.600 1.600 1.600 4.150 0 5.750Z" fill="none" stroke="#3d3d3d" stroke-width="1.200" stroke-linejoin="round"/></svg>
</div>
<div class="list-row">
<div class="rowline" style="top:765px"></div>
<span class="cb" style="left:304px;top:736px"></span>
<a class="t idc" style="left:335.2px;top:734px;font-size:15.2px;color:#383838;letter-spacing:0.25px;font-weight:700;width:285.1px;overflow:hidden;">1651 - Earnest Money - SMURPS</a>
<span class="pill" style="top:733px"></span>
<span class="t" style="left:644.8px;top:735px;font-size:14px;color:#336fa6;letter-spacing:0.74px;">Enabled</span>
<span class="t" style="left:816.5px;top:735px;font-size:15.2px;color:#4c4c4c;letter-spacing:0.52px;">Earnest Money</span>
<span class="t" style="left:997.3px;top:735px;font-size:15.2px;color:#4c4c4c;letter-spacing:-0.51px;">1651</span>
<span class="t" style="left:1286.5px;top:734px;font-size:13.6px;color:#4c4c4c;word-spacing:-1.300px;">1 y</span>
<svg class="ic" style="left:1329px;top:736px" width="20" height="18" viewBox="1329 736 20 18"><path transform="translate(1330.5 737.1)" d="M6.81 11.32A7.45 5.45 0 1 0 1.92 9.00L3.500 13.900Z" fill="none" stroke="#3d3d3d" stroke-width="1.200" stroke-linejoin="round"/></svg>
<span class="t" style="left:1352.9px;top:733px;font-size:15.2px;color:#4c4c4c;">0</span>
<span class="t" style="left:1370.2px;top:734px;font-size:13px;color:#444;font-weight:700;">·</span>
<svg class="ic" style="left:1382px;top:736px" width="20" height="18" viewBox="1382 736 20 18"><path transform="translate(1383.1 737.1)" d="M8.450 14.250 1.750 7.750C.150 6.150.150 3.600 1.750 2C3.300.450 5.900.450 7.450 2L8.450 3l1-1C11 .450 13.600.450 15.150 2c1.600 1.600 1.600 4.150 0 5.750Z" fill="none" stroke="#3d3d3d" stroke-width="1.200" stroke-linejoin="round"/></svg>
</div>
<div class="list-row">
<div class="rowline" style="top:810px"></div>
<span class="cb" style="left:304px;top:781px"></span>
<a class="t idc" style="left:335.2px;top:779px;font-size:15.2px;color:#383838;letter-spacing:0.44px;font-weight:700;width:285.1px;overflow:hidden;">1400 - Stock Assets - SMURPS</a>
<span class="pill" style="top:778px"></span>
<span class="t" style="left:644.8px;top:780px;font-size:14px;color:#336fa6;letter-spacing:0.74px;">Enabled</span>
<span class="t" style="left:817.0px;top:780px;font-size:15.2px;color:#4c4c4c;letter-spacing:0.69px;">Stock Assets</span>
<span class="t" style="left:997.3px;top:780px;font-size:15.2px;color:#4c4c4c;letter-spacing:0.98px;">1400</span>
<span class="t" style="left:1286.5px;top:779px;font-size:13.6px;color:#4c4c4c;word-spacing:-1.300px;">1 y</span>
<svg class="ic" style="left:1329px;top:781px" width="20" height="18" viewBox="1329 781 20 18"><path transform="translate(1330.5 782.1)" d="M6.81 11.32A7.45 5.45 0 1 0 1.92 9.00L3.500 13.900Z" fill="none" stroke="#3d3d3d" stroke-width="1.200" stroke-linejoin="round"/></svg>
<span class="t" style="left:1352.9px;top:778px;font-size:15.2px;color:#4c4c4c;">0</span>
<span class="t" style="left:1370.2px;top:779px;font-size:13px;color:#444;font-weight:700;">·</span>
<svg class="ic" style="left:1382px;top:781px" width="20" height="18" viewBox="1382 781 20 18"><path transform="translate(1383.1 782.1)" d="M8.450 14.250 1.750 7.750C.150 6.150.150 3.600 1.750 2C3.300.450 5.900.450 7.450 2L8.450 3l1-1C11 .450 13.600.450 15.150 2c1.600 1.600 1.600 4.150 0 5.750Z" fill="none" stroke="#3d3d3d" stroke-width="1.200" stroke-linejoin="round"/></svg>
</div>
<div class="list-row">
<div class="rowline" style="top:855px"></div>
<span class="cb" style="left:304px;top:826px"></span>
<a class="t idc" style="left:335.2px;top:824px;font-size:15.2px;color:#383838;letter-spacing:0.42px;font-weight:700;width:285.1px;overflow:hidden;">1500 - Tax Assets - SMURPS</a>
<span class="pill" style="top:823px"></span>
<span class="t" style="left:644.8px;top:825px;font-size:14px;color:#336fa6;letter-spacing:0.74px;">Enabled</span>
<span class="t" style="left:817.4px;top:825px;font-size:15.2px;color:#4c4c4c;letter-spacing:0.62px;">Tax Assets</span>
<span class="t" style="left:997.3px;top:825px;font-size:15.2px;color:#4c4c4c;letter-spacing:0.78px;">1500</span>
<span class="t" style="left:1286.5px;top:824px;font-size:13.6px;color:#4c4c4c;word-spacing:-1.300px;">1 y</span>
<svg class="ic" style="left:1329px;top:826px" width="20" height="18" viewBox="1329 826 20 18"><path transform="translate(1330.5 827.1)" d="M6.81 11.32A7.45 5.45 0 1 0 1.92 9.00L3.500 13.900Z" fill="none" stroke="#3d3d3d" stroke-width="1.200" stroke-linejoin="round"/></svg>
<span class="t" style="left:1352.9px;top:823px;font-size:15.2px;color:#4c4c4c;">0</span>
<span class="t" style="left:1370.2px;top:824px;font-size:13px;color:#444;font-weight:700;">·</span>
<svg class="ic" style="left:1382px;top:826px" width="20" height="18" viewBox="1382 826 20 18"><path transform="translate(1383.1 827.1)" d="M8.450 14.250 1.750 7.750C.150 6.150.150 3.600 1.750 2C3.300.450 5.900.450 7.450 2L8.450 3l1-1C11 .450 13.600.450 15.150 2c1.600 1.600 1.600 4.150 0 5.750Z" fill="none" stroke="#3d3d3d" stroke-width="1.200" stroke-linejoin="round"/></svg>
</div>
</section>
</main>
<div class="hl"></div>
</body>
</html>
